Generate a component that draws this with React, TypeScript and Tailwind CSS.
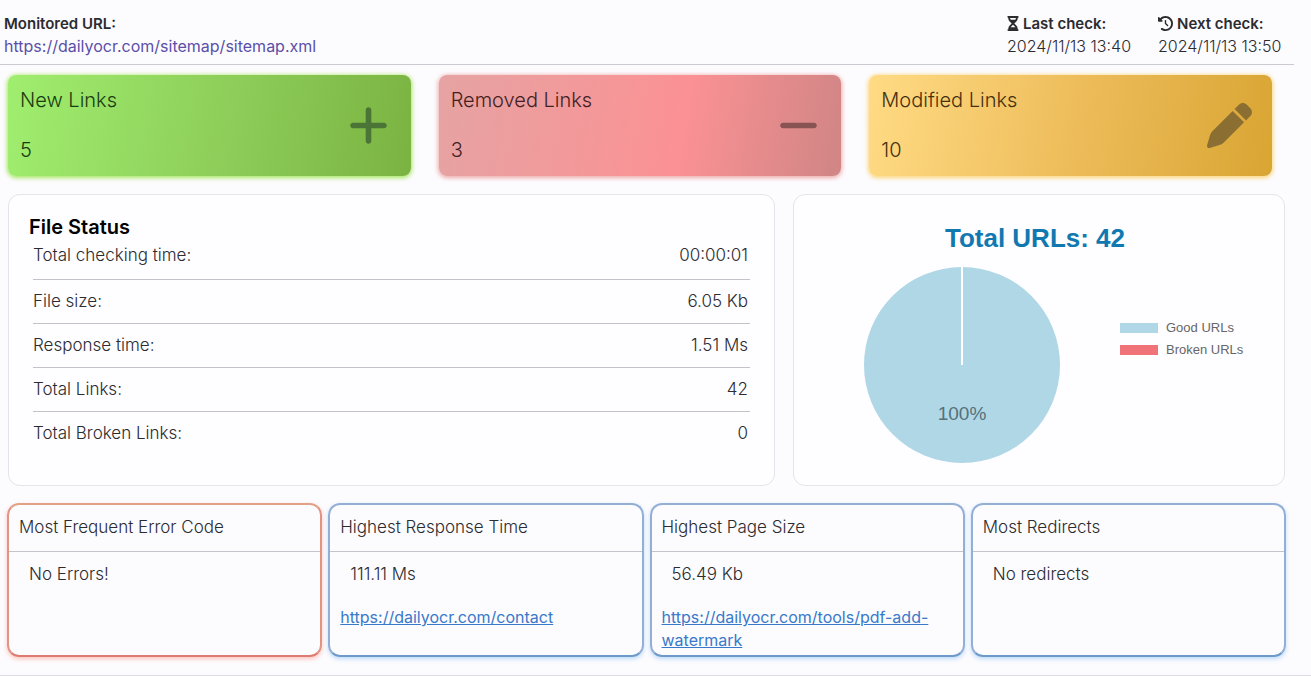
import React from 'react';
import { FaPlus, FaMinus, FaPen, FaHourglassHalf, FaClockRotateLeft } from 'react-icons/fa6';

const linkCards = [
  { label: 'New Links', value: 5, icon: FaPlus, style: 'bg-linear-100 from-[#a0ee6f] via-[#8fd05b] to-[#7bb341] shadow-[0_1px_4px_1px_#a5e85f]', text: 'text-[#173d10]', iconColor: 'text-[#4a7536]' },
  { label: 'Removed Links', value: 3, icon: FaMinus, style: 'bg-linear-100 from-[#e6a3a3] via-[#fb9194] via-60% to-[#d08585] shadow-[0_1px_4px_1px_#eeaaa8]', text: 'text-[#43201f]', iconColor: 'text-[#875353]' },
  { label: 'Modified Links', value: 10, icon: FaPen, style: 'bg-linear-100 from-[#ffdb84] via-[#eebd5b] to-[#d9a532] shadow-[0_1px_4px_1px_#fbd678]', text: 'text-[#46300f]', iconColor: 'text-[#8b6f32]' },
];

const fileStatus = [
  { label: 'Total checking time:', value: '00:00:01' },
  { label: 'File size:', value: '6.05 Kb' },
  { label: 'Response time:', value: '1.51 Ms' },
  { label: 'Total Links:', value: '42' },
  { label: 'Total Broken Links:', value: '0' },
];

const highlights = [
  { title: 'Most Frequent Error Code', value: 'No Errors!', error: true },
  { title: 'Highest Response Time', value: '111.11 Ms', link: 'https://dailyocr.com/contact' },
  { title: 'Highest Page Size', value: '56.49 Kb', link: 'https://dailyocr.com/tools/pdf-add-watermark' },
  { title: 'Most Redirects', value: 'No redirects' },
];

function Header() {
  return (
    <header className="mr-[17px] flex h-[65px] justify-between border-b border-[#cbc9d2] pt-3 pr-1 pl-1 text-base leading-[23px]">
      <div>
        <div className="text-[15px] leading-[23px] font-semibold">Monitored URL:</div>
        <a href="https://dailyocr.com/sitemap/sitemap.xml" className="text-[#5b4fa8]">https://dailyocr.com/sitemap/sitemap.xml</a>
      </div>
      <div className="flex gap-4">
        <div className="w-[135px]">
          <div className="flex items-center gap-1 text-[15px] leading-[23px] font-semibold"><FaHourglassHalf className="w-3" />Last check:</div>
          <div className="font-light">2024/11/13 13:40</div>
        </div>
        <div className="w-[132px]">
          <div className="flex items-center gap-1 text-[15px] leading-[23px] font-semibold"><FaClockRotateLeft />Next check:</div>
          <div className="font-light">2024/11/13 13:50</div>
        </div>
      </div>
    </header>
  );
}

function TotalsChart() {
  return (
    <section className="flex flex-col rounded-xl border border-[#e6e3ec] bg-[#fefdff] px-4 pt-[27px] font-['Liberation_Sans',Arial,sans-serif]">
      <h2 className="pr-2 text-center text-[26px] leading-8 font-bold text-[#1279b0]">Total URLs: 42</h2>
      <div className="mt-[13px] flex items-start">
        <div className="flex flex-1 justify-center">
          <svg width="196" height="196" viewBox="0 0 196 196" role="img" aria-label="Good URLs 100%">
            <circle cx="98" cy="98" r="98" fill="#afd7e6" />
            <line x1="98" y1="0" x2="98" y2="98" stroke="#fff" strokeWidth="2" />
            <text x="98" y="153" textAnchor="middle" fontSize="19" fill="#55717b">100%</text>
          </svg>
        </div>
        <ul className="mt-[50px] mr-2 w-[146px] pl-[6px] text-[13px] leading-[22px] text-[#666]">
          <li className="flex items-center gap-2"><span className="h-[10px] w-[38px] bg-[#afd7e6]" />Good URLs</li>
          <li className="flex items-center gap-2"><span className="h-[10px] w-[38px] bg-[#f07379]" />Broken URLs</li>
        </ul>
      </div>
    </section>
  );
}

export default function App() {
  return (
    <div className="h-screen bg-[#fcfbfe] font-['Inter','Open_Sans',sans-serif] text-[#2b2b30]">
      <main className="border-b border-[#dddbe2] pb-[18px]">
        <Header />

        {/* Link counters */}
        <div className="mt-[10px] mr-[39px] ml-2 grid grid-cols-3 gap-7">
          {linkCards.map(({ label, value, icon: Icon, style, text, iconColor }) => (
            <section key={label} className={`flex h-[101px] items-center justify-between rounded-lg pr-5 pl-3 ${style}`}>
              <div className={`text-xl leading-[25px] font-light ${text}`}>
                <h2 className="mb-[25px]">{label}</h2>
                <p>{value}</p>
              </div>
              <Icon className={`size-[45px] ${iconColor}`} />
            </section>
          ))}
        </div>

        <div className="mt-[18px] mr-[26px] ml-2 grid h-[292px] grid-cols-[767fr_492fr] gap-[18px]">
          <section className="rounded-xl border border-[#e6e3ec] bg-[#fefdff] px-5 pt-5">
            <h2 className="text-xl leading-6 font-semibold text-black">File Status</h2>
            <table className="mx-1 w-[calc(100%-8px)] text-[17px] leading-6 font-light">
              <tbody>
                {fileStatus.map((row) => (
                  <tr key={row.label} className="group h-[44px] border-b border-[#c4c2ca] align-top first:h-10 last:border-0">
                    <th scope="row" className="pt-[9px] text-left font-light group-first:pt-1">{row.label}</th>
                    <td className="pt-[9px] pr-[2px] text-right group-first:pt-1">{row.value}</td>
                  </tr>
                ))}
              </tbody>
            </table>
          </section>
          <TotalsChart />
        </div>

        {/* Highlights */}
        <div className="mt-[17px] mr-[25px] ml-[7px] grid grid-cols-4 gap-[6px]">
          {highlights.map((item) => (
            <section
              key={item.title}
              className={`h-[154px] rounded-xl border-2 ${item.error ? 'border-[#df9484] border-t-[#e0a184] border-b-[#dd7b72] shadow-[0_2px_4px_#ffc5bd]' : 'border-[#93afd6] border-b-[#6d9aca] shadow-[0_2px_4px_#bedcfa]'}`}
            >
              <h2 className="h-[47px] border-b border-[#c4c2ca] px-[10px] pt-[11px] text-[17px] leading-[23px] font-light">{item.title}</h2>
              <p className="px-5 pt-[10px] text-[17px] leading-6 font-light">{item.value}</p>
              {item.link && (
                <a href={item.link} className="mx-[10px] mt-5 block text-base leading-[23px] text-[#3879c9] underline">{item.link}</a>
              )}
            </section>
          ))}
        </div>
      </main>
    </div>
  );
}
